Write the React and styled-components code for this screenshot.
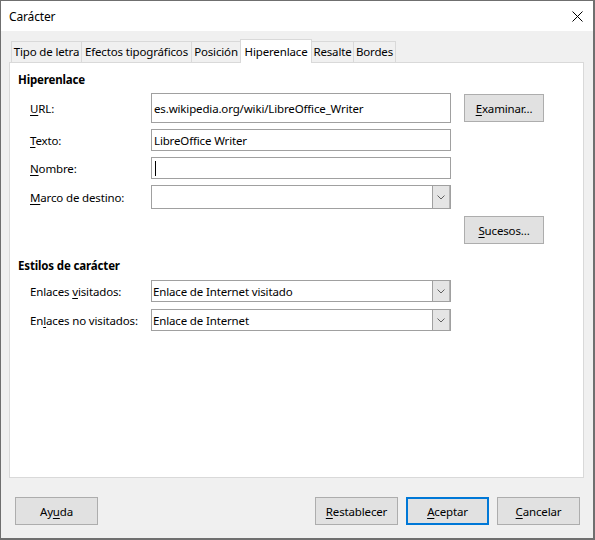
import React from "react";
import styled, { createGlobalStyle } from "styled-components";

const Global = createGlobalStyle`
  html, body {
    margin: 0;
    padding: 0;
    background: #fff;
  }
  body {
    font-family: "Noto Sans", "Open Sans", sans-serif;
    font-size: 11.5px;
    letter-spacing: -0.15px;
    color: #000;
  }
`;

const Window = styled.div`
  box-sizing: border-box;
  width: 595px;
  height: 540px;
  border-style: solid;
  border-color: #6f6f6f;
  border-width: 1px 2px 2px 1px;
  background: #f0f0f0;
  display: flex;
  flex-direction: column;
`;

const TitleBar = styled.div`
  height: 30px;
  background: #fff;
  display: flex;
  align-items: center;
  justify-content: space-between;
  padding: 1px 9px 0 8px;
  box-sizing: border-box;
  font-size: 12px;
`;

const Close = styled.svg`
  width: 11px;
  height: 11px;
  margin-right: 1px;
`;

const Body = styled.div`
  flex: 1;
  padding-top: 8px;
  display: flex;
  flex-direction: column;
`;

const TabStrip = styled.div`
  height: 23px;
  display: flex;
  align-items: flex-start;
  padding-left: 11px;
`;

const Tab = styled.div`
  box-sizing: border-box;
  width: ${(p) => p.$w}px;
  height: ${(p) => (p.$active ? 24 : 21)}px;
  margin-top: ${(p) => (p.$active ? 0 : 2)}px;
  margin-left: -1px;
  border: 1px solid #d9d9d9;
  border-bottom: none;
  background: ${(p) => (p.$active ? "#fff" : "#f0f0f0")};
  position: relative;
  z-index: ${(p) => (p.$active ? 2 : 1)};
  display: flex;
  align-items: flex-start;
  padding-top: ${(p) => (p.$active ? 4 : 2)}px;
  justify-content: center;
  white-space: nowrap;
  line-height: 16px;
`;

const Panel = styled.div`
  box-sizing: border-box;
  height: 416px;
  margin: 0 9px 0 8px;
  border: 1px solid #d9d9d9;
  background: #fff;
  padding: 9px 0 0 8px;
  display: flex;
  flex-direction: column;
  position: relative;
  z-index: 1;
`;

const Heading = styled.div`
  font-weight: bold;
  line-height: 16px;
  height: 16px;
  margin-top: ${(p) => p.$mt || 0}px;
`;

const Form = styled.div`
  padding-left: 12px;
  margin-top: ${(p) => p.$mt || 0}px;
  display: flex;
  flex-direction: column;
  gap: ${(p) => p.$gap}px;
`;

const Row = styled.div`
  display: grid;
  grid-template-columns: 108px 300px 80px;
  column-gap: 13px;
  height: ${(p) => p.$h}px;
  margin-top: ${(p) => p.$mt || 0}px;
  align-items: center;
`;

const Label = styled.label`
  line-height: 16px;
  padding-top: 1px;
  white-space: nowrap;
`;

const Key = styled.span`
  text-decoration: underline;
  text-underline-offset: 2px;
`;

const Field = styled.div`
  box-sizing: border-box;
  height: ${(p) => p.$h}px;
  border: 1px solid #a0a0a0;
  background: #fff;
  display: flex;
  align-items: center;
  padding: 2px 0 0 2px;
  line-height: 16px;
  white-space: nowrap;
  overflow: hidden;
`;

const Caret = styled.span`
  display: inline-block;
  width: 1px;
  height: 15px;
  background: #000;
  margin: -2px 0 0 1px;
`;

const Combo = styled.div`
  box-sizing: border-box;
  height: ${(p) => p.$h}px;
  border: 1px solid #a0a0a0;
  background: #fff;
  display: flex;
  align-items: stretch;
  line-height: 16px;
`;

const ComboText = styled.div`
  flex: 1;
  display: flex;
  align-items: center;
  padding: 1px 0 0 1px;
  white-space: nowrap;
`;

const DropButton = styled.div`
  width: 16px;
  border-left: 1px solid #a0a0a0;
  border-right: 1px solid #b4b4b4;
  background: #e5e5e5;
  display: flex;
  align-items: center;
  justify-content: center;
`;

const Chevron = () => (
  <svg width="8" height="5" viewBox="0 0 8 5">
    <path d="M0.5 0.5 L4 4 L7.5 0.5" fill="none" stroke="#606060" strokeWidth="1" />
  </svg>
);

const Button = styled.button`
  box-sizing: border-box;
  width: ${(p) => p.$w || 83}px;
  height: 28px;
  background: #e1e1e1;
  border: ${(p) => (p.$default ? "2px solid #0078d7" : "1px solid #adadad")};
  font-family: inherit;
  font-size: inherit;
  letter-spacing: inherit;
  color: #000;
  padding: 1px 0 0;
  line-height: 16px;
`;

const ButtonCell = styled.div`
  grid-column: 3;
  display: flex;
  align-items: center;
`;

const Footer = styled.div`
  display: flex;
  align-items: center;
  gap: 8px;
  padding: 19px 13px 0 14px;
`;

const Spacer = styled.div`
  flex: 1;
`;

const tabs = [
  { label: "Tipo de letra", w: 71 },
  { label: "Efectos tipográficos", w: 111 },
  { label: "Posición", w: 50 },
  { label: "Hiperenlace", w: 72, active: true },
  { label: "Resalte", w: 43 },
  { label: "Bordes", w: 43 },
];

const DropCombo = ({ h, children }) => (
  <Combo $h={h}>
    <ComboText>{children}</ComboText>
    <DropButton>
      <Chevron />
    </DropButton>
  </Combo>
);

export default function App() {
  return (
    <>
      <Global />
      <Window>
        <TitleBar>
          <span>Carácter</span>
          <Close viewBox="0 0 11 11">
            <path d="M0.5 0.5 L10.5 10.5 M10.5 0.5 L0.5 10.5" stroke="#000" strokeWidth="1" />
          </Close>
        </TitleBar>
        <Body>
          <TabStrip>
            {tabs.map((t) => (
              <Tab key={t.label} $w={t.w} $active={t.active}>
                {t.label}
              </Tab>
            ))}
          </TabStrip>
          <Panel>
            <Heading>Hiperenlace</Heading>
            <Form $mt={5} $gap={6}>
              <Row $h={30}>
                <Label>
                  <Key>U</Key>RL:
                </Label>
                <Field $h={30}>es.wikipedia.org/wiki/LibreOffice_Writer</Field>
                <ButtonCell>
                  <Button $w={80}>
                    <Key>E</Key>xaminar...
                  </Button>
                </ButtonCell>
              </Row>
              <Row $h={22}>
                <Label>
                  <Key>T</Key>exto:
                </Label>
                <Field $h={22}>LibreOffice Writer</Field>
              </Row>
              <Row $h={22}>
                <Label>
                  <Key>N</Key>ombre:
                </Label>
                <Field $h={22}>
                  <Caret />
                </Field>
              </Row>
              <Row $h={24}>
                <Label>
                  <Key>M</Key>arco de destino:
                </Label>
                <DropCombo h={24} />
              </Row>
              <Row $h={28} $mt={1}>
                <ButtonCell>
                  <Button $w={80}>
                    <Key>S</Key>ucesos...
                  </Button>
                </ButtonCell>
              </Row>
            </Form>
            <Heading $mt={14}>Estilos de carácter</Heading>
            <Form $mt={6} $gap={7}>
              <Row $h={22}>
                <Label>
                  Enlaces <Key>v</Key>isitados:
                </Label>
                <DropCombo h={22}>Enlace de Internet visitado</DropCombo>
              </Row>
              <Row $h={22}>
                <Label>
                  En<Key>l</Key>aces no visitados:
                </Label>
                <DropCombo h={22}>Enlace de Internet</DropCombo>
              </Row>
            </Form>
          </Panel>
          <Footer>
            <Button>
              Ay<Key>u</Key>da
            </Button>
            <Spacer />
            <Button>
              <Key>R</Key>establecer
            </Button>
            <Button $default>
              <Key>A</Key>ceptar
            </Button>
            <Button>
              <Key>C</Key>ancelar
            </Button>
          </Footer>
        </Body>
      </Window>
    </>
  );
}
